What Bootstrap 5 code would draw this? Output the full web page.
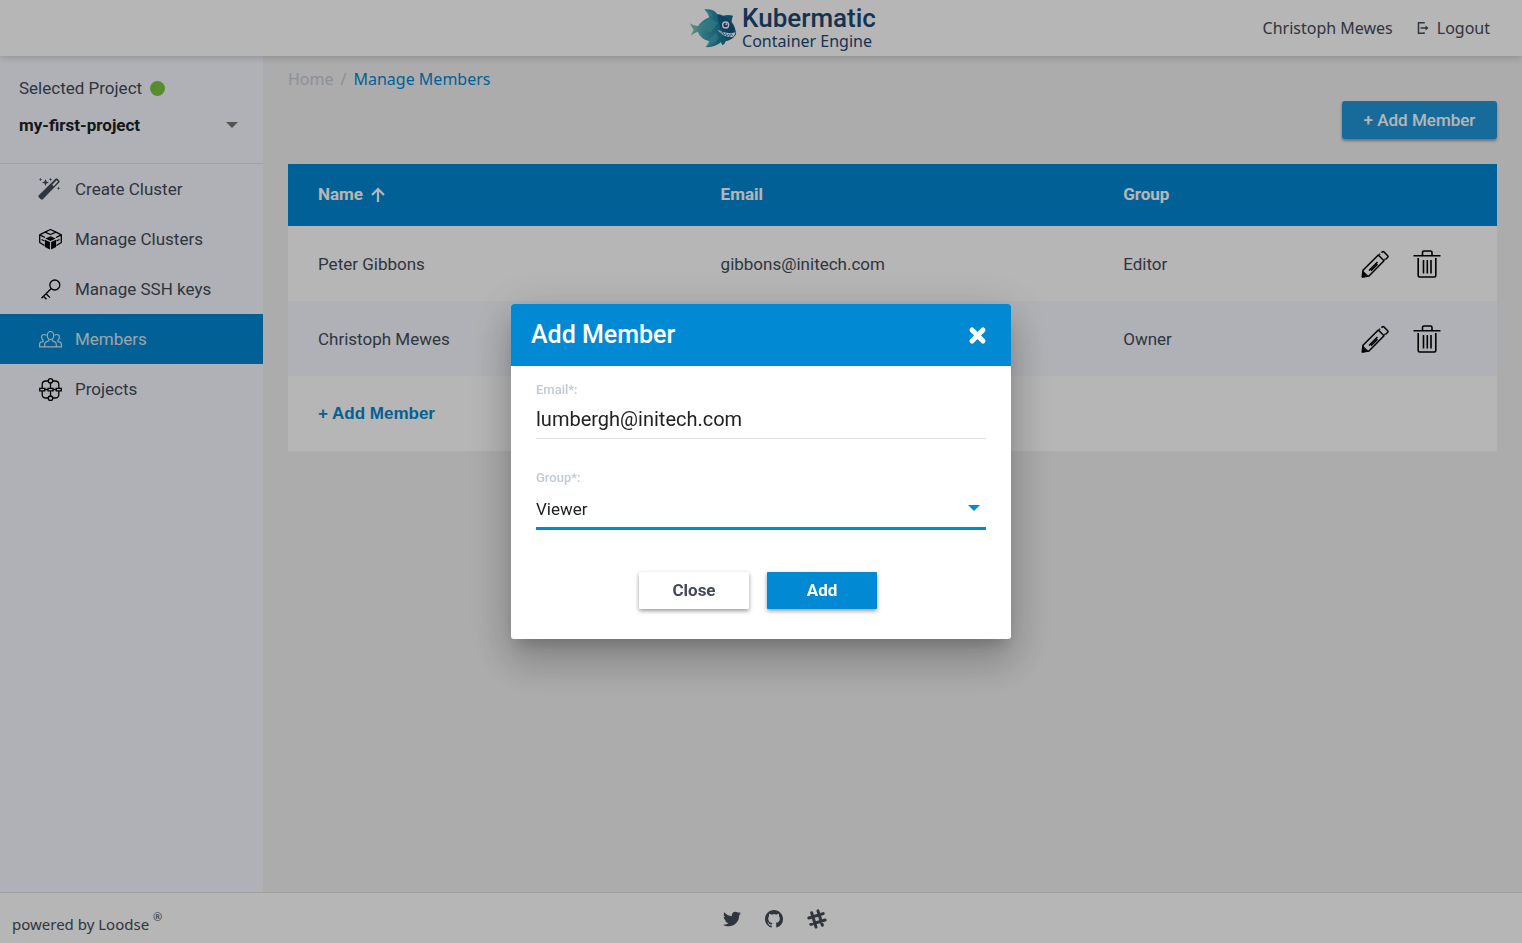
<!DOCTYPE html>
<html lang="en">
<head>
<meta charset="utf-8">
<meta name="viewport" content="width=device-width, initial-scale=1">
<title>Kubermatic – Manage Members</title>
<link href="https://cdn.jsdelivr.net/npm/bootstrap@5.3.0/dist/css/bootstrap.min.css" rel="stylesheet">
<style>
:root { --brand: #0289d4; --ink: #434b58; --ui: Roboto, "Liberation Sans", sans-serif; --alt: "Noto Sans", "Open Sans", sans-serif; }
body { font-family: var(--ui); font-size: 17px; line-height: 24px; color: var(--ink); background: #f1f1f1; }
a { color: inherit; text-decoration: none; }
.topbar { height: 56px; z-index: 2; box-shadow: 0 1px 8px rgba(0,0,0,.2); font-family: var(--alt); font-size: 16px; }
.topbar-side { flex: 1 1 0; }
.brand-logo { padding-left: 74px; color: #1d4873; }
.brand-name { font-family: var(--ui); font-size: 26px; line-height: 26px; font-weight: 500; }
.brand-sub { font-size: 16px; line-height: 20px; }
.side { width: 263px; background: #f7f9ff; }
.project { padding: 20px 19px 25px; border-bottom: 1px solid #e2e5ea; }
.project-pick { margin-top: 12px; }
.dot { width: 15px; height: 15px; background: #7bc642; }
.plain-select { appearance: none; border: 0; border-radius: 0; padding: 0; background: transparent; width: 100%; outline: 0; }
.caret { position: absolute; right: 6px; top: 50%; margin-top: -3px; border: 6px solid transparent; border-top-color: currentColor; border-bottom: 0; pointer-events: none; }
.project .plain-select { font-weight: 700; color: #212121; height: 26px; display: block; }
.project .caret { color: #757575; }
.side-link { height: 50px; padding-left: 38px; gap: 12px; }
.side-link svg { width: 25px; height: 25px; color: #000; }
.side-link.active { background: var(--brand); color: #dfe6ec; }
.side-link.active svg { color: #dfe6ec; }
.side-link .wand { color: var(--ink); }
.page { padding: 11px 25px; }
.crumbs { font-family: var(--alt); font-size: 16px; gap: 7px; color: #c5cad3; }
.crumbs .here { color: var(--brand); }
.btn-add, .btn-add:hover { background: #1f96da; color: #fff; width: 155px; height: 38px; padding: 1px 0 0; font-size: 17px; font-weight: 500; border: 0; border-radius: 3px; margin: 10px 0 25px; box-shadow: 0 2px 3px rgba(0,0,0,.35); }
.members { table-layout: fixed; width: 100%; background: #fff; }
.members th { background: var(--brand); color: #fff; height: 62px; padding: 0 30px 2px; font-weight: 700; }
.members td { height: 75px; padding: 0 30px; }
.members .alt-row td { background: #f7f9ff; }
.members .tools { padding-right: 56px; }
.icon-btn { border: 0; background: none; padding: 0; color: #000; display: block; line-height: 0; }
.link-add { border: 0; background: none; padding: 0; color: var(--brand); font-family: "Liberation Sans", Arial, sans-serif; font-weight: 700; }
.foot { height: 51px; border-top: 1px solid #e0e0e0; background: #fff; font-family: var(--alt); font-size: 15px; }
.foot-text { padding: 12px 0 0 12px; flex: 1 1 0; }
.foot-icons { padding: 2px 0 0 15px; }
.foot sup { font-size: 11px; top: -.8em; }
.modal-backdrop.show { opacity: .288; }
.modal { --bs-modal-width: 500px; }
.dialog-box { border: 0; border-radius: 3px; box-shadow: 0 11px 15px -7px rgba(0,0,0,.2), 0 24px 38px 3px rgba(0,0,0,.14), 0 9px 46px 8px rgba(0,0,0,.12); }
.dialog-head { height: 62px; padding: 0 24px 0 20px; border: 0; border-radius: 3px 3px 0 0; background: var(--brand); color: #fff; }
.dialog-head h1 { font-size: 25px; line-height: 30px; font-weight: 500; }
.dialog-head .icon-btn { color: #fff; }
.dialog-body { padding: 14px 25px 30px; color: #212121; }
.dialog-body label { display: block; font-size: 13px; line-height: 20px; font-weight: 500; color: #c0c9d6; }
.field-text { display: block; width: 100%; height: 39px; border: 0; border-bottom: 1px solid #e0e3e7; padding: 0; font-size: 20px; color: #212121; outline: 0; margin-bottom: 29px; }
.group-pick { border-bottom: 3px solid var(--brand); margin-bottom: 42px; }
.group-pick .plain-select { display: block; height: 39px; padding-top: 2px; color: #212121; }
.group-pick .caret { color: var(--brand); }
.dialog-actions { gap: 18px; padding-right: 6px; }
.dialog-actions .btn { width: 110px; height: 37px; padding: 0; border: 0; border-radius: 1px; font-size: 17px; font-weight: 700; box-shadow: 0 2px 4px rgba(0,0,0,.4); }
.btn-close-it { background: #fff; color: var(--ink); }
.btn-submit { background: var(--brand); color: #fff; }
</style>
</head>
<body class="d-flex flex-column min-vh-100">

<svg width="0" height="0" class="position-absolute" aria-hidden="true">
  <symbol id="pencil" viewBox="0 0 28 28">
    <g fill="none" stroke="currentColor" stroke-width="1.500" stroke-linejoin="round">
      <path d="M1.200 27 2 20.300 17.300 5 23 10.700 8 26zM8 20.500l8.500-8.500M10 20.800l6.500-6.500M20.500 2.700l.8-.8q.8-.7 1.600 0l3.800 3.800q.7.800 0 1.600l-2 2M18.300 4.500l.9-.8M23.500 9.800l.8-.8"/>
    </g>
    <path d="M1 27.500 1.700 20.500 8 26.500z" fill="currentColor"/>
  </symbol>
  <symbol id="trash" viewBox="0 0 28 28">
    <g fill="none" stroke="currentColor" stroke-width="1.600">
      <path d="M.5 5.700h27M9.500 5.500V2.500Q9.500 1 11 1h6.500q1.500 0 1.500 1.500v3M5.200 8v17.500q0 1.500 1.500 1.500h14.600q1.500 0 1.500-1.500V8M10.500 10v13.500M14.300 10v13.500M18 10v13.500"/>
    </g>
  </symbol>
</svg>

<header class="topbar bg-white d-flex align-items-center position-relative">
  <div class="topbar-side"></div>
  <a href="#" class="brand-logo d-flex align-items-center">
    <svg width="50" height="42" viewBox="30 18 150 126" aria-hidden="true">
      <defs><linearGradient id="fish"><stop offset="0" stop-color="#8fc9b8"/><stop offset=".3" stop-color="#3fa5b4"/><stop offset=".65" stop-color="#1c7f9f"/><stop offset="1" stop-color="#135a87"/></linearGradient></defs>
      <path fill="url(#fish)" d="M36 67q10 8 24 9 10-17 34-27-3-14-15-24 29-3 38 14 9 1 19 5 13-4 29 0-4 9-4 19 12 15 13 37-9 16-31 21-3 10-10 12l-4-9q-20 17-47 14 11-7 12-18-26-5-35-28-12 4-20 12 2-8 8-18-8-9-11-19z"/>
      <path fill="#4db5bc" opacity=".5" d="M94 50 120 66 98 94 62 77zM80 26q20 4 25 20l-9 3zM94 113l20-19 8 16q-10 20-36 24z"/>
      <path fill="#0d4a78" opacity=".55" d="M117 41q28 2 43 27 8 15 12 32-12 12-26 12l-18-30z"/>
      <path fill="#fff" d="M118 86q28 16 54 8 0 9-8 14-26 3-46-22z"/>
      <path fill="none" stroke="#135a87" stroke-width="2" d="M127 92l4 5 4-3 3 8 6-5 2 9 6-7 3 8 5-9 4 7"/>
      <circle cx="143" cy="72" r="11" fill="#fff"/><circle cx="143" cy="72" r="7" fill="#1d4873"/><circle cx="145" cy="70" r="3" fill="#fff"/>
    </svg>
    <span class="d-flex flex-column ms-1"><span class="brand-name">Kubermatic</span><span class="brand-sub">Container Engine</span></span>
  </a>
  <nav class="topbar-side d-flex justify-content-end align-items-center pe-4 me-2">
    <a href="#" class="me-4">Christoph Mewes</a>
    <a href="#" class="d-flex align-items-center gap-2">
      <svg width="12" height="12" viewBox="0 0 12 12" fill="none" stroke="currentColor" stroke-width="1.500" aria-hidden="true"><path d="M7 1.500V.8H1.500v10.400H7v-1M3.500 6H10"/><path d="M8.500 3.500 11.500 6 8.500 8.500z" fill="currentColor" stroke="none"/></svg>
      Logout</a>
  </nav>
</header>

<div class="d-flex flex-grow-1">
  <aside class="side flex-shrink-0">
    <div class="project">
      <label for="project" class="d-flex align-items-center gap-2 mb-0">Selected Project <span class="dot rounded-circle"></span></label>
      <div class="project-pick position-relative">
        <select id="project" class="plain-select"><option>my-first-project</option></select>
        <span class="caret"></span>
      </div>
    </div>
    <nav>
      <a href="#" class="side-link d-flex align-items-center">
        <svg class="wand" viewBox="0 0 25 25" aria-hidden="true"><path fill="currentColor" fill-rule="evenodd" d="M17.500 1.800q1-.9 2 0l1.700 1.700q.9 1 0 2L4.800 22.300q-1 .9-2 0L.8 20.300q-.9-1 0-2zM18.600 3.300 14.200 7.700l1.500 1.500 4.400-4.600zM7.500 2l1 2.600 2.500.9-2.500 1-1 2.500-1-2.500-2.500-1 2.500-.9zM2.500.8l.5 1.200 1.200.5L3 3l-.5 1.200L2 3 .8 2.500 2 2zM12.500.8l.5 1.200 1.200.5L13 3l-.5 1.200L12 3l-1.200-.5L12 2zM20.500 9.500l.5 1.200 1.200.5-1.200.5-.5 1.200-.5-1.200-1.200-.5 1.200-.5z"/></svg>
        Create Cluster</a>
      <a href="#" class="side-link d-flex align-items-center">
        <svg viewBox="0 0 25 25" aria-hidden="true"><path fill="none" stroke="currentColor" stroke-width="1.300" stroke-linejoin="round" d="M7 5.200 12.500 2.500 18 5.200M7 5.200 12.500 7.500 18 5.200M7 5.200 1.700 7.800V15.500L6.500 18.500M18 5.200 23.300 7.800V15.500L18.500 18.500M1.700 7.800 7 10.500M23.300 7.800 18 10.500M3.500 12.500l3 1.500M21.500 12.500l-3 1.500"/><path fill="currentColor" d="M12.500 9.200 17.600 11.600 12.500 14 7.400 11.600zM6.900 12.700l5 2.300v7.600l-5-2.700zM18.100 12.700l-5 2.300v7.600l5-2.700z"/></svg>
        Manage Clusters</a>
      <a href="#" class="side-link d-flex align-items-center">
        <svg viewBox="0 0 25 25" fill="none" stroke="currentColor" stroke-width="1.300" aria-hidden="true"><circle cx="16.800" cy="8" r="5"/><path d="M13 11.700 3.500 21.200M8 16.800l4 3.800M5.500 19.200l3 3"/></svg>
        Manage SSH keys</a>
      <a href="#" class="side-link d-flex align-items-center active" aria-current="page">
        <svg viewBox="0 0 25 25" fill="none" stroke="currentColor" stroke-width="1.200" aria-hidden="true"><ellipse cx="12.500" cy="8.500" rx="3.200" ry="4"/><path d="M6.700 19.800v-2.600q0-2 2-2.600l2-.8v-1.600M18.300 19.800v-2.600q0-2-2-2.600l-2-.8v-1.600M1.600 19.800v-2.500q0-1.700 1.500-2.200l2-.6v-1.200q-1.500-1.300-1.500-3 0-2.800 2.500-2.800 1.500 0 2.200 1M23.400 19.800v-2.500q0-1.700-1.500-2.200l-2-.6v-1.200q1.500-1.300 1.500-3 0-2.800-2.500-2.800-1.500 0-2.200 1M1 19.800h23"/></svg>
        Members</a>
      <a href="#" class="side-link d-flex align-items-center">
        <svg viewBox="0 0 25 25" fill="none" stroke="currentColor" stroke-width="1.300" aria-hidden="true"><circle cx="12.500" cy="3.800" r="2.200"/><circle cx="12.500" cy="21.200" r="2.200"/><path d="M1.700 11.300h5v2.500h-5zM10 11.300h5v2.500h-5zM18.300 11.300h5v2.500h-5zM12.500 6v5M12.500 14v5M6.700 12.500H10M15 12.500h3.300M4.200 11V7.500Q4.200 4 8 4h2M4.200 14v3.500Q4.200 21 8 21h2M20.800 11V7.500Q20.800 4 17 4h-2M20.800 14v3.500q0 3.500-3.800 3.500h-2"/></svg>
        Projects</a>
    </nav>
  </aside>

  <main class="page flex-grow-1">
    <nav class="crumbs d-flex"><a href="#">Home</a><span>/</span><a href="#" class="here">Manage Members</a></nav>
    <div class="d-flex justify-content-end"><button type="button" class="btn btn-add">+ Add Member</button></div>
    <table class="members">
      <colgroup><col style="width:33.300%"><col style="width:33.300%"><col style="width:16.700%"><col style="width:16.700%"></colgroup>
      <thead><tr>
        <th scope="col"><span class="d-flex align-items-center gap-2">Name <svg width="14" height="15" viewBox="0 0 14 15" fill="none" stroke="currentColor" stroke-width="2.200" aria-hidden="true"><path d="M7 15V2M1 8 7 2l6 6"/></svg></span></th>
        <th scope="col">Email</th><th scope="col">Group</th><th></th>
      </tr></thead>
      <tbody>
        <tr><td>Peter Gibbons</td><td>gibbons@initech.com</td><td>Editor</td>
          <td class="tools"><div class="d-flex justify-content-end gap-4"><button class="icon-btn" aria-label="Edit"><svg width="28" height="28"><use href="#pencil"/></svg></button><button class="icon-btn" aria-label="Delete"><svg width="28" height="28"><use href="#trash"/></svg></button></div></td></tr>
        <tr class="alt-row"><td>Christoph Mewes</td><td></td><td>Owner</td>
          <td class="tools"><div class="d-flex justify-content-end gap-4"><button class="icon-btn" aria-label="Edit"><svg width="28" height="28"><use href="#pencil"/></svg></button><button class="icon-btn" aria-label="Delete"><svg width="28" height="28"><use href="#trash"/></svg></button></div></td></tr>
        <tr><td colspan="4"><button type="button" class="link-add">+ Add Member</button></td></tr>
      </tbody>
    </table>
  </main>
</div>

<footer class="foot d-flex align-items-center">
  <div class="foot-text">powered by <a href="#">Loodse <sup>®</sup></a></div>
  <div class="foot-icons d-flex align-items-center gap-4">
    <a href="#" aria-label="Twitter" class="d-flex"><svg width="18" height="18" viewBox="0 0 512 512" fill="currentColor"><path d="M459.370 151.716c.325 4.548.325 9.097.325 13.645 0 138.720-105.583 298.558-298.558 298.558-59.452 0-114.680-17.219-161.137-47.106 8.447.974 16.568 1.299 25.340 1.299 49.055 0 94.213-16.568 130.274-44.832-46.132-.975-84.792-31.188-98.112-72.772 6.498.974 12.995 1.624 19.818 1.624 9.421 0 18.843-1.300 27.614-3.573-48.081-9.747-84.143-51.980-84.143-102.985v-1.299c13.969 7.797 30.214 12.670 47.431 13.319-28.264-18.843-46.781-51.005-46.781-87.391 0-19.492 5.197-37.360 14.294-52.954 51.655 63.675 129.300 105.258 216.365 109.807-1.624-7.797-2.599-15.918-2.599-24.040 0-57.828 46.782-104.934 104.934-104.934 30.213 0 57.502 12.670 76.670 33.137 23.715-4.548 46.456-13.320 66.599-25.340-7.798 24.366-24.366 44.833-46.132 57.827 21.117-2.273 41.584-8.122 60.426-16.243-14.292 20.791-32.161 39.308-52.628 54.253z"/></svg></a>
    <a href="#" aria-label="GitHub" class="d-flex"><svg width="18" height="18" viewBox="0 0 16 16" fill="currentColor"><path d="M8 0C3.580 0 0 3.580 0 8c0 3.540 2.290 6.530 5.470 7.590.4.070.55-.17.55-.38 0-.19-.01-.82-.01-1.490-2.010.37-2.530-.49-2.690-.94-.09-.23-.48-.94-.82-1.130-.28-.15-.68-.52-.01-.53.63-.01 1.080.58 1.230.82.72 1.210 1.870.87 2.330.66.070-.52.280-.87.510-1.070-1.780-.2-3.640-.89-3.640-3.950 0-.87.310-1.590.82-2.150-.08-.2-.36-1.020.08-2.120 0 0 .67-.21 2.200.82.640-.18 1.320-.27 2-.27s1.360.09 2 .27c1.530-1.040 2.200-.82 2.200-.82.440 1.100.160 1.920.080 2.120.510.560.820 1.270.820 2.150 0 3.070-1.870 3.750-3.650 3.950.290.250.540.730.540 1.480 0 1.070-.01 1.930-.01 2.200 0 .210.150.460.550.380A8.010 8.010 0 0 0 16 8c0-4.420-3.580-8-8-8z"/></svg></a>
    <a href="#" aria-label="Slack" class="d-flex"><svg width="20" height="20" viewBox="0 0 20 20" fill="none" stroke="currentColor" stroke-width="3" stroke-linecap="round"><g transform="rotate(-17 10 10)"><path d="M6.700 2.500v15M13.300 2.500v15M2.500 6.700h15M2.500 13.300h15"/></g></svg></a>
  </div>
  <div class="topbar-side"></div>
</footer>

<div class="modal-backdrop show"></div>
<div class="modal d-block" tabindex="-1" role="dialog" aria-modal="true" aria-labelledby="dialog-title">
  <div class="modal-dialog modal-dialog-centered">
    <form class="modal-content dialog-box">
      <div class="modal-header dialog-head">
        <h1 id="dialog-title" class="mb-0">Add Member</h1>
        <button type="button" class="icon-btn" aria-label="Close dialog"><svg width="19" height="19" viewBox="0 0 19 19" stroke="currentColor" stroke-width="5" stroke-linecap="round"><path d="M4 4l11 11M15 4 4 15"/></svg></button>
      </div>
      <div class="dialog-body">
        <label for="email">Email*:</label>
        <input id="email" type="email" class="field-text" value="lumbergh@initech.com">
        <label for="group">Group*:</label>
        <div class="group-pick position-relative">
          <select id="group" class="plain-select"><option>Viewer</option><option>Editor</option><option>Owner</option></select>
          <span class="caret"></span>
        </div>
        <div class="dialog-actions d-flex justify-content-center">
          <button type="button" class="btn btn-close-it">Close</button>
          <button type="submit" class="btn btn-submit">Add</button>
        </div>
      </div>
    </form>
  </div>
</div>
<script src="https://cdn.jsdelivr.net/npm/bootstrap@5.3.0/dist/js/bootstrap.bundle.min.js"></script>
</body>
</html>
